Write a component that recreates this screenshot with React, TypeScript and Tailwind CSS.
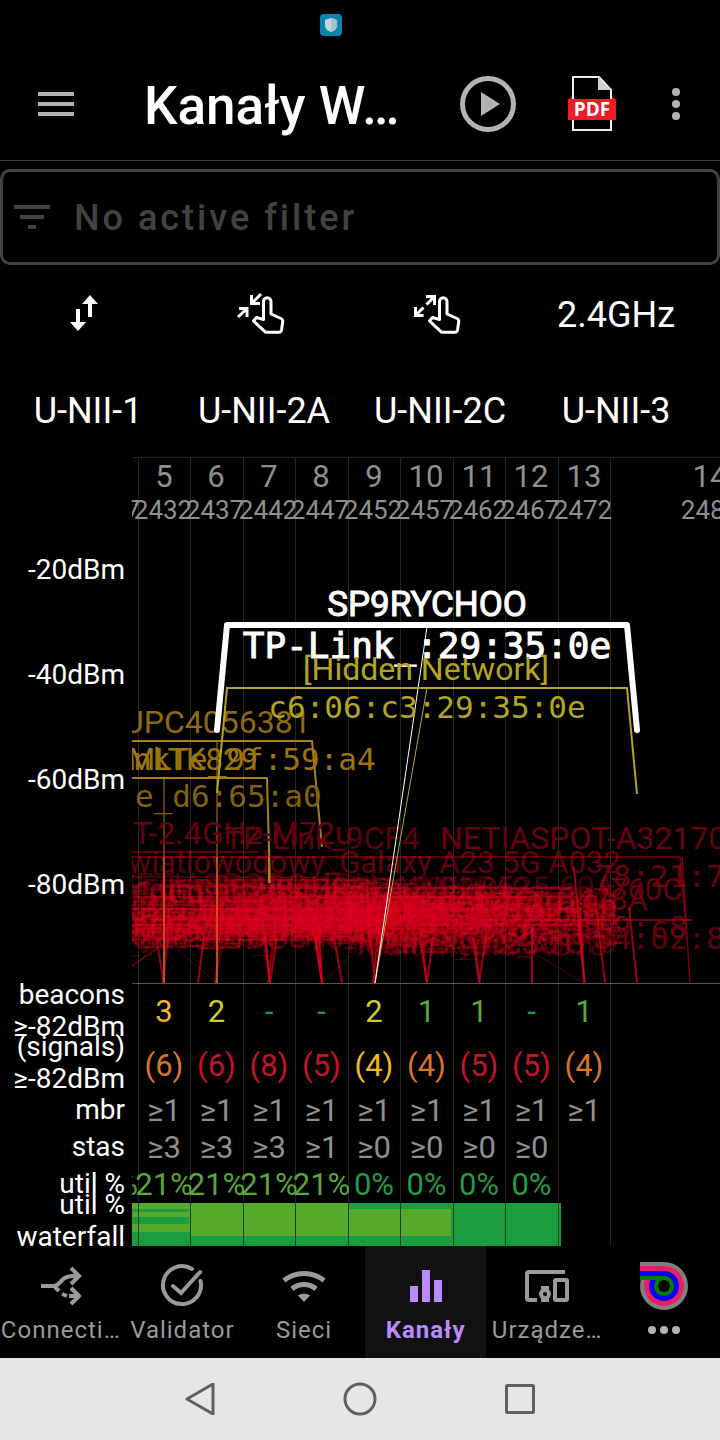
import React from "react";

const CHANNELS = [5, 6, 7, 8, 9, 10, 11, 12, 13];
const GRID = [6, 58, 111, 163, 216, 268, 321, 373, 426, 478];
const CENTERS = [32, 84, 137, 189, 242, 294, 347, 399, 452];
const ROBOTO = "Roboto, sans-serif";
const MONO = "'DejaVu Sans Mono', monospace";

function rng(seed: number) {
  let s = seed;
  return () => {
    s = (s * 1664525 + 1013904223) % 4294967296;
    return s / 4294967296;
  };
}

type Net = { name: string; mono: boolean; x: number; y: number; size: number };

const SSIDS = [
  "UPC4056381", "TP-Link_9CF4", "Galaxy A23 5G", "Orange_Swiatlowodowy", "FunBox2-B478",
  "NETIASPOT-2.4GHz", "PLAY_Internet_760", "UPC0629180", "Multimedia_AB78", "HUAWEI-B525-60A",
];

function weakNetworks(): Net[] {
  const r = rng(77);
  const hex = () => Math.floor(r() * 256).toString(16).padStart(2, "0");
  const out: Net[] = [];
  for (let i = 0; i < 92; i++) {
    const mono = i % 2 === 0;
    const name = mono
      ? `${SSIDS[Math.floor(r() * SSIDS.length)].slice(0, 6)}_${hex()}:${hex()}:${hex()}`
      : SSIDS[Math.floor(r() * SSIDS.length)];
    const x = CENTERS[Math.floor(r() * 8)] - 30 + (r() - 0.5) * 90;
    const y = 436 + Math.floor((r() * 0.75 + r() * 0.25) * 64);
    out.push({ name, mono, x: Math.min(x, 350), y, size: mono ? 30 : 32 });
  }
  return out;
}

const WEAK = weakNetworks();

function weakLines() {
  const r = rng(19);
  const out: { d: string; o: number }[] = [];
  for (let i = 0; i < 34; i++) {
    const c = CENTERS[Math.floor(r() * 7)];
    const y = 420 + Math.floor(r() * 66);
    out.push({
      d: `M${c - 106} 526 L${c - 98} ${y} H${c + 98} L${c + 106} 526`,
      o: 0.15 + r() * 0.25,
    });
  }
  return out;
}

const WEAK_LINES = weakLines();

function Label(p: { x: number; y: number; size: number; fill: string; mono?: boolean; start?: boolean; opacity?: number; outline?: number; children: React.ReactNode }) {
  return (
    <text
      x={p.x}
      y={p.y}
      fontSize={p.size}
      fill={p.fill}
      stroke={p.outline ? p.fill : undefined}
      strokeWidth={p.outline}
      opacity={p.opacity}
      fontFamily={p.mono ? MONO : ROBOTO}
      textAnchor={p.start ? "start" : "middle"}
    >
      {p.children}
    </text>
  );
}

function SpectrumChart() {
  return (
    <svg className="block h-[527px] min-w-0 flex-1" viewBox="0 0 588 527" preserveAspectRatio="xMinYMin slice" role="img" aria-label="Channels">
      <path d={`M0 .5H588${GRID.map((x) => `M${x + 0.5} 0V527`).join("")}`} stroke="#262626" />
      {CHANNELS.map((c, i) => (
        <g key={c}>
          <Label x={CENTERS[i]} y={30} size={31} fill="#8f8f8f">{c}</Label>
          <Label x={CENTERS[i] - 1} y={62} size={26} fill="#8f8f8f">{2407 + c * 5}</Label>
        </g>
      ))}
      <Label x={-21} y={62} size={26} fill="#8f8f8f">2427</Label>
      <Label x={578} y={30} size={31} fill="#8f8f8f">14</Label>
      <Label x={578} y={62} size={26} fill="#8f8f8f">2484</Label>

      <g fill="none" stroke="#a8801c" strokeWidth={2}>
        <path d="M0 284H180L190 390" />
        <path d="M0 321H135L138 426" />
        <path d="M32 321V526M85 284V526" strokeWidth={1} />
      </g>
      <Label x={-9} y={276} size={32} fill="#8f6a12" start>UPC4056381</Label>
      <Label x={-4} y={313} size={31} fill="#9c7410" start>MLTK829</Label>
      <Label x={1} y={313} size={31} fill="#9c7410" mono start>nkTe_9f:59:a4</Label>
      <Label x={3} y={350} size={31} fill="#83610f" mono start>e_d6:65:a0</Label>

      <g>
        <Label x={1} y={387} size={32} fill="#68000f" start>T-2.4GHz-M72u</Label>
        <Label x={92} y={392} size={32} fill="#68000f" opacity={0.9} start>TP-Link_9CF4</Label>
        <Label x={308} y={392} size={32} fill="#68000f" start>NETIASPOT-A32170</Label>
        <Label x={-4} y={416} size={31} fill="#780012" opacity={0.8} start>wiatlowodowy_Galaxy A23 5G A032</Label>
        <Label x={462} y={430} size={31} fill="#68000f" mono start>78:21:7c</Label>
        <Label x={478} y={443} size={31} fill="#700010" opacity={0.9} start>760C</Label>
        <Label x={424} y={453} size={31} fill="#700010" opacity={0.9} start>B478A</Label>
        <Label x={462} y={481} size={31} fill="#700010" opacity={0.9} mono start>59:c8</Label>
        <Label x={462} y={492} size={31} fill="#68000f" opacity={0.9} mono start>34:02:80</Label>
        {WEAK.map((n, i) => (
          <Label key={i} x={n.x} y={n.y} size={n.size} fill="#dc001e" opacity={0.29} mono={n.mono}>{n.name}</Label>
        ))}
      </g>
      <g fill="none" stroke="#dc001e">
        {WEAK_LINES.map((l, i) => (
          <path key={i} d={l.d} opacity={l.o} strokeWidth={1.5} />
        ))}
        <path d="M0 395H127M0 400H548L556 495M0 440H400M0 509L30 488M550 400L558 526" strokeWidth={1.5} opacity={0.55} />
        <path d="M0 452H450M0 468H440M120 431H440M300 463H560" strokeWidth={2} opacity={0.5} />
        <path d="M24 480L32 526M72 480L66 526M133 480L138 526L145 480M178 450L190 526L187 470M202 480L210 526M243 526L250 470M288 480L295 526L301 480M341 480L347 526L354 480M400 470V526M442 410L452 526L448 450M464 450L473 526M497 450L505 526" strokeWidth={2} opacity={0.7} />
        <path d="M30 480L85 526M190 526L240 480M375 480L452 526M190 400L230 450" strokeWidth={1} opacity={0.35} />
      </g>
      <path d="M32 400V526M85 400V526" stroke="#e0812a" />
      <path d="M137 400V426" stroke="#a8801c" strokeWidth={2} />

      <g fill="none">
        <path d="M295 231L243 526" stroke="#b5a53a" />
        <path d="M295 170L243 526" stroke="#fff" />
        <path d="M85 336L95 231H495L505 337" stroke="#b3a52c" strokeWidth={2} />
        <path d="M85 273L95 168H495L505 273" stroke="#fff" strokeWidth={6} strokeLinecap="round" strokeLinejoin="round" />
      </g>
      <Label x={295} y={159} size={35} fill="#fff" outline={1}>SP9RYCHOO</Label>
      <Label x={295} y={201} size={36} fill="#fff" outline={1} mono>TP-Link_:29:35:0e</Label>
      <Label x={294} y={223} size={32} fill="#b3a51e">[Hidden Network]</Label>
      <Label x={295} y={261} size={31} fill="#b3a51e" mono>c6:06:c3:29:35:0e</Label>
      <path d="M0 526.5H588" stroke="#555" />
    </svg>
  );
}

const YELLOW = "text-[#f2b827]";
const LIME = "text-[#cdce2b]";
const GREEN = "text-[#5aa637]";
const TEAL = "text-[#249a47]";
const ORANGE = "text-[#dc7426]";
const RED = "text-[#c51327]";
const GRAY = "text-[#8f8f8f]";

type Row = { label: string[]; height: string; labelHeight: string; cells: [string, string][] };

const ROWS: Row[] = [
  {
    label: ["beacons", "≥-82dBm"],
    height: "h-[54px]",
    labelHeight: "h-[54px]",
    cells: [["3", YELLOW], ["2", LIME], ["-", TEAL], ["-", TEAL], ["2", LIME], ["1", GREEN], ["1", GREEN], ["-", TEAL], ["1", GREEN]],
  },
  {
    label: ["(signals)", "≥-82dBm"],
    height: "h-[54px]",
    labelHeight: "h-[50px]",
    cells: [["(6)", ORANGE], ["(6)", RED], ["(8)", RED], ["(5)", RED], ["(4)", YELLOW], ["(4)", ORANGE], ["(5)", RED], ["(5)", RED], ["(4)", ORANGE]],
  },
  { label: ["mbr"], height: "h-[37px]", labelHeight: "h-9", cells: CHANNELS.map(() => ["≥1", GRAY]) },
  {
    label: ["stas"],
    height: "h-[37px]",
    labelHeight: "h-9",
    cells: [["≥3", GRAY], ["≥3", GRAY], ["≥3", GRAY], ["≥1", GRAY], ["≥0", GRAY], ["≥0", GRAY], ["≥0", GRAY], ["≥0", GRAY], ["", GRAY]],
  },
  {
    label: ["util %"],
    height: "h-[37px]",
    labelHeight: "h-9",
    cells: [["21%", GREEN], ["21%", GREEN], ["21%", GREEN], ["21%", GREEN], ["0%", TEAL], ["0%", TEAL], ["0%", TEAL], ["0%", TEAL], ["", TEAL]],
  },
];

function RowLabel({ lines, height }: { lines: string[]; height: string }) {
  return (
    <th scope="row" className="p-0 align-top font-normal">
      <div className={`flex flex-col items-end justify-center pr-[7px] text-[28px] leading-8 whitespace-nowrap ${height}`}>
        {lines.map((l) => (
          <span key={l}>{l}</span>
        ))}
      </div>
    </th>
  );
}

function ChannelTable() {
  return (
    <table className="w-full table-fixed border-collapse">
      <colgroup>
        <col className="w-[132px]" />
        <col className="w-[6px]" />
        <col className="w-[52px]" />
        <col className="w-[53px]" />
        <col className="w-[52px]" />
        <col className="w-[53px]" />
        <col className="w-[52px]" />
        <col className="w-[53px]" />
        <col className="w-[52px]" />
        <col className="w-[53px]" />
        <col className="w-[52px]" />
        <col />
      </colgroup>
      <tbody>
        {ROWS.map((row, r) => (
          <tr key={r} className={row.height}>
            <RowLabel lines={row.label} height={row.labelHeight} />
            <td className="p-0">
              {r === 4 && (
                <div className="flex justify-end overflow-hidden text-[31px] leading-8 text-[#5aa637]">%</div>
              )}
            </td>
            {row.cells.map(([value, color], i) => (
              <td key={i} className={`p-0 shadow-[inset_1px_0_0_#262626] ${color}`}>
                <div className="flex justify-center pt-px text-[31px] leading-8 whitespace-nowrap">{value}</div>
              </td>
            ))}
            <td className="p-0 shadow-[inset_1px_0_0_#262626]" />
          </tr>
        ))}
        <tr>
          <RowLabel lines={["util %", "waterfall"]} height="h-9" />
          <td colSpan={11} className="p-0">
            <svg className="block h-[43px] w-full" viewBox="0 0 588 43" preserveAspectRatio="xMinYMin slice" aria-hidden="true">
              <path d="M0 0H429V43H0Z" fill="#1a9e3d" />
              <path d="M0 0H216V33H58V29H0V21H57V14H0V9H57V6H0Z" fill="#57a92b" />
              <path d="M214 6H319V33H214Z" fill="#57a92b" />
              <path d={GRID.slice(0, 9).map((x) => `M${x + 0.5} 0V43`).join("")} stroke="#14401d" />
              <path d="M478.5 0V43" stroke="#262626" />
            </svg>
          </td>
        </tr>
      </tbody>
    </table>
  );
}

function PdfIcon() {
  return (
    <svg className="h-14 w-12" viewBox="0 0 48 56" aria-hidden="true">
      <path d="M5 1H31L43 14V54H5Z" fill="#000" stroke="#eee" strokeWidth="2" />
      <path d="M30 1V14H43Z" fill="#cfcfcf" />
      <path d="M4 20L0 24V43H48V24L44 20V24H4Z" fill="#c5161d" />
      <rect y="23" width="48" height="21" fill="#ed1c24" />
      <text x="24" y="40" textAnchor="middle" fontFamily="'Open Sans', sans-serif" fontWeight="700" fontSize="19" fill="#fff">PDF</text>
    </svg>
  );
}

function PinchIcon({ spread }: { spread?: boolean }) {
  return (
    <svg className="h-12 w-12" viewBox="0 0 48 48" fill="none" stroke="#fff" strokeWidth="3" aria-hidden="true">
      <path d="M26.500 30.500V12.500a3.750 3.750 0 0 1 7.500 0V25L44 29.500c1.400.7 2 1.500 1.800 3L44.500 41c-.3 1.500-1 2.200-2.500 2.200H28.500L16.500 32l3-3.500Z" strokeLinejoin="round" />
      {spread ? (
        <path d="M13 7.500H21.500V16M21 8L13.500 15.500M2.500 18V26.500H10.500M3 26L10.500 18.500" />
      ) : (
        <path d="M14.500 6V14.500H23M15 14L24 5M2 19.500H10V28M10 19.500L1 28" />
      )}
    </svg>
  );
}

const NAV_BTN = "flex h-28 min-w-0 flex-1 flex-col items-center gap-1 pt-4 text-2xl leading-8 tracking-[1px] text-[#9a9a9a]";

export default function App() {
  return (
    <div className="flex min-h-screen flex-col overflow-hidden bg-black font-[Roboto,sans-serif] text-white">
      <div className="flex h-12 justify-center pr-[58px] pt-[14px]">
        <svg className="h-[22px] w-[22px]" viewBox="0 0 22 22" aria-hidden="true">
          <rect width="22" height="22" rx="4" fill="#0b84ae" />
          <path d="M11 4L17 6V11C17 15 14 17 11 18C8 17 5 15 5 11V6Z" fill="#c3d6dc" />
          <path d="M11 4L17 6V11C17 15 14 17 11 18Z" fill="#a9c3cc" />
        </svg>
      </div>

      <header className="flex h-[113px] items-center border-b border-[#3a3a3a]">
        <button aria-label="Menu" className="flex w-28 justify-center">
          <svg className="h-6 w-9" viewBox="0 0 36 24" aria-hidden="true">
            <path d="M0 0H36V4H0ZM0 10H36V14H0ZM0 20H36V24H0Z" fill="#b3b3b3" />
          </svg>
        </button>
        <h1 className="min-w-0 flex-1 pt-1 pl-8 text-[53px] leading-[60px] font-medium whitespace-nowrap">Kanały W…</h1>
        <button aria-label="Play" className="flex w-[104px] justify-center">
          <svg className="h-14 w-14" viewBox="0 0 56 56" aria-hidden="true">
            <circle cx="28" cy="28" r="25.500" fill="none" stroke="#b3b3b3" strokeWidth="5" />
            <path d="M21 16V40L40 28Z" fill="#b3b3b3" />
          </svg>
        </button>
        <button aria-label="PDF" className="flex w-[104px] justify-center">
          <PdfIcon />
        </button>
        <button aria-label="More" className="flex w-[76px] justify-center pr-3">
          <svg className="h-8 w-2" viewBox="0 0 8 32" fill="#b3b3b3" aria-hidden="true">
            <circle cx="4" cy="4" r="4" />
            <circle cx="4" cy="16" r="4" />
            <circle cx="4" cy="28" r="4" />
          </svg>
        </button>
      </header>

      <button className="mt-2 flex h-24 items-center rounded-[10px] border-3 border-[#424242] pl-[11px] text-4xl font-medium tracking-[3px] text-[#424242]">
        <svg className="mr-6 h-6 w-9" viewBox="0 0 36 24" aria-hidden="true">
          <path d="M0 0H36V4H0ZM6 10H30V14H6ZM14 20H22V24H14Z" fill="#424242" />
        </svg>
        <span className="pt-0.5">No active filter</span>
      </button>

      <div className="grid grid-cols-4 pr-4 text-4xl [&>button]:flex [&>button]:h-24 [&>button]:items-center [&>button]:justify-center">
        <button aria-label="Sort" className="pr-2">
          <svg className="h-9 w-7" viewBox="0 0 28 36" fill="#fff" aria-hidden="true">
            <path d="M18 22V9H12L20 0L28 9H22V22ZM6 14H10V27H16L8 36L0 27H6Z" />
          </svg>
        </button>
        <button aria-label="Zoom out" className="pr-1.5"><PinchIcon /></button>
        <button aria-label="Zoom in" className="pr-1.5"><PinchIcon spread /></button>
        <button className="pt-1">2.4GHz</button>
        <button className="pt-1">U-NII-1</button>
        <button className="pt-1">U-NII-2A</button>
        <button className="pt-1">U-NII-2C</button>
        <button className="pt-1">U-NII-3</button>
      </div>

      <main className="h-[789px] overflow-hidden">
        <div className="flex">
          <div className="flex w-[132px] flex-col pt-[60px] pr-[7px] text-right text-[28px] [&>div]:h-[105px] [&>div]:leading-[105px]">
            <div>-20dBm</div>
            <div>-40dBm</div>
            <div>-60dBm</div>
            <div>-80dBm</div>
          </div>
          <SpectrumChart />
        </div>
        <ChannelTable />
      </main>

      <nav className="flex">
        <button className={NAV_BTN}>
          <svg className="h-12 w-12" viewBox="0 0 48 48" fill="none" stroke="#9a9a9a" strokeWidth="4" aria-hidden="true">
            <path d="M4 24H17C24 24 23 14 36 14H42M34 6L42 14L34 22M18 25L22 29M25 32L30 34M32 34H42M34 26L42 34L34 42" />
          </svg>
          <span className="w-full truncate">Connecti…</span>
        </button>
        <button className={NAV_BTN}>
          <svg className="h-12 w-12" viewBox="0 0 48 48" fill="none" stroke="#9a9a9a" strokeWidth="4" strokeLinecap="round" aria-hidden="true">
            <path d="M34 7A19 19 0 1 0 42.500 19M15 24L23 31L42 10" />
          </svg>
          <span>Validator</span>
        </button>
        <button className={NAV_BTN}>
          <svg className="h-12 w-12" viewBox="0 0 48 48" fill="none" stroke="#9a9a9a" strokeWidth="5" aria-hidden="true">
            <path d="M4 18.500C15 9 33 9 44 18.500M12 27C19 21 29 21 36 27" />
            <path d="M18 33.500C21 31 27 31 30 33.500L24 40Z" fill="#9a9a9a" stroke="none" />
          </svg>
          <span>Sieci</span>
        </button>
        <button aria-current="page" className="flex h-28 min-w-0 flex-1 flex-col items-center gap-1 bg-[#111] pt-4 text-2xl leading-8 font-bold text-[#b98aff]">
          <svg className="h-12 w-12" viewBox="0 0 48 48" fill="#b98aff" aria-hidden="true">
            <path d="M8 24H16V40H8ZM20 8H28V40H20ZM32 18H40V40H32Z" />
          </svg>
          <span className="tracking-[1px]">Kanały</span>
        </button>
        <button className={NAV_BTN}>
          <svg className="h-12 w-12" viewBox="0 0 48 48" fill="none" stroke="#9a9a9a" strokeWidth="4" aria-hidden="true">
            <path d="M42 10H6Q4 10 4 12V36Q4 38 6 38H14" />
            <rect x="32" y="18" width="12" height="20" rx="1" />
            <circle cx="22" cy="32" r="4" />
            <path d="M18 26H26M18 38H26" />
          </svg>
          <span className="w-full truncate">Urządze…</span>
        </button>
        <button aria-label="More" className="flex h-28 w-28 flex-col items-center gap-4 pt-4">
          <svg className="h-12 w-12" viewBox="0 0 48 48" aria-hidden="true">
            <circle cx="24" cy="24" r="24" fill="#808080" />
            <circle cx="24" cy="24" r="20" fill="#e91e63" />
            <circle cx="24" cy="24" r="15" fill="#00f" />
            <circle cx="24" cy="24" r="10" fill="#008000" />
            <path d="M0 0H24V4H0Z" fill="#808080" />
            <path d="M0 4H24V9H0Z" fill="#e91e63" />
            <path d="M0 9H24V14H0Z" fill="#00f" />
            <path d="M0 14H24V18H0Z" fill="#008000" />
            <circle cx="24" cy="24" r="6" fill="#000" />
          </svg>
          <svg className="h-2 w-8" viewBox="0 0 32 8" fill="#b3b3b3" aria-hidden="true">
            <circle cx="4" cy="4" r="4" />
            <circle cx="16" cy="4" r="4" />
            <circle cx="28" cy="4" r="4" />
          </svg>
        </button>
      </nav>

      <footer className="flex min-h-[82px] flex-1 items-center justify-center gap-32 bg-[#e6e6e6]">
        <button aria-label="Back">
          <svg className="h-8 w-8" viewBox="0 0 32 32" fill="none" stroke="#606060" strokeWidth="3" strokeLinejoin="round" aria-hidden="true">
            <path d="M29 1V31L3 16Z" />
          </svg>
        </button>
        <button aria-label="Home">
          <svg className="h-8 w-8 overflow-visible" viewBox="0 0 32 32" fill="none" stroke="#606060" strokeWidth="3" aria-hidden="true">
            <circle cx="16" cy="16" r="15" />
          </svg>
        </button>
        <button aria-label="Recent">
          <svg className="h-8 w-8" viewBox="0 0 32 32" fill="none" stroke="#606060" strokeWidth="3" aria-hidden="true">
            <rect x="2.500" y="2.500" width="27" height="27" rx="1" />
          </svg>
        </button>
      </footer>
    </div>
  );
}
